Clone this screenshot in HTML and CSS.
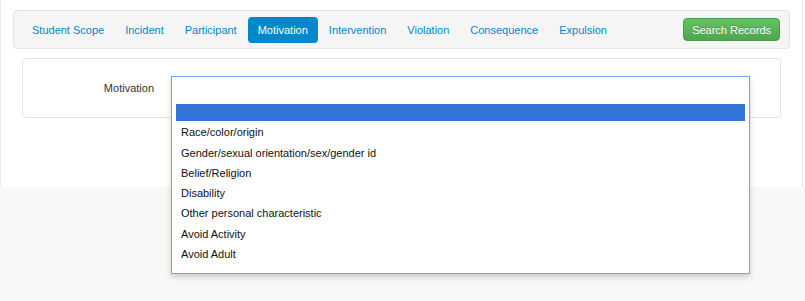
FILE: index.html
```html
<!DOCTYPE html>
<html lang="en">
<head>
    <meta charset="UTF-8">
    <meta name="viewport" content="width=device-width, initial-scale=1.0">
    <title>Search Records</title>
    <link rel="stylesheet" href="styles.css">
</head>
<body>
    <div class="top">
        <div class="page">
            <div class="navbar">
                <nav class="tabs">
                    <a href="#">Student Scope</a>
                    <a href="#">Incident</a>
                    <a href="#">Participant</a>
                    <a href="#" class="active">Motivation</a>
                    <a href="#">Intervention</a>
                    <a href="#">Violation</a>
                    <a href="#">Consequence</a>
                    <a href="#">Expulsion</a>
                </nav>
                <button class="btn-search">Search Records</button>
            </div>

            <div class="card">
                <label class="field-label">Motivation</label>
                <div class="select-wrap">
                    <div class="dropdown">
                        <div class="dropdown-search"></div>
                        <ul class="options">
                            <li class="highlight"></li>
                            <li>Race/color/origin</li>
                            <li>Gender/sexual orientation/sex/gender id</li>
                            <li>Belief/Religion</li>
                            <li>Disability</li>
                            <li>Other personal characteristic</li>
                            <li>Avoid Activity</li>
                            <li>Avoid Adult</li>
                        </ul>
                    </div>
                </div>
            </div>
        </div>
    </div>
</body>
</html>
```

FILE: styles.css
```css
* {
    margin: 0;
    padding: 0;
    box-sizing: border-box;
}

body {
    font-family: "Liberation Sans", Arial, sans-serif;
    font-size: 11px;
    min-height: 100vh;
    background-color: #f8f8f8;
    color: #333;
}

.top {
    background-color: #fff;
}

.page {
    width: 803px;
    height: 187px;
    padding: 10px 12px 0 12px;
    border-left: 1px solid #ececec;
    border-right: 1px solid #e6e6e6;
}

.navbar {
    display: flex;
    align-items: center;
    height: 39px;
    padding: 0 9px 0 8px;
    background-color: #f5f5f5;
    border: 1px solid #e3e3e3;
    border-radius: 4px;
}

.tabs {
    display: flex;
    gap: 1px;
}

.tabs a {
    display: block;
    padding: 5px 10px;
    line-height: 16px;
    color: #0088cc;
    text-decoration: none;
    border-radius: 4px;
}

.tabs a.active {
    background-color: #0088cc;
    color: #fff;
}

.btn-search {
    margin-left: auto;
    height: 23px;
    padding: 0 8px;
    font-family: inherit;
    font-size: 11px;
    color: #fff;
    background: linear-gradient(#62c462, #51a351);
    border: 1px solid #4a9a4a;
    border-radius: 4px;
    text-shadow: 0 -1px 0 rgba(0, 0, 0, 0.2);
}

.card {
    display: flex;
    margin: 9px 9px 0 9px;
    padding: 17px 0;
    border: 1px solid #e3e3e3;
    border-radius: 4px;
}

.field-label {
    width: 148px;
    flex-shrink: 0;
    padding-right: 17px;
    text-align: right;
    line-height: 24px;
    color: #333;
}

.select-wrap {
    position: relative;
    flex-grow: 1;
    height: 24px;
    margin-right: 30px;
}

.dropdown {
    position: absolute;
    top: 0;
    left: 0;
    right: 0;
    background-color: #fff;
    border: 1px solid #6ea3f8;
    box-shadow: 0 3px 6px rgba(0, 0, 0, 0.18);
    padding: 0 4px 10px 4px;
}

.dropdown-search {
    height: 27px;
}

.options {
    list-style: none;
}

.options li {
    height: 17px;
    line-height: 17px;
    padding: 0 5px;
    color: #111;
}

.options li + li {
    margin-top: 3.3px;
}

.options li.highlight {
    background-color: #3574d8;
}
```
